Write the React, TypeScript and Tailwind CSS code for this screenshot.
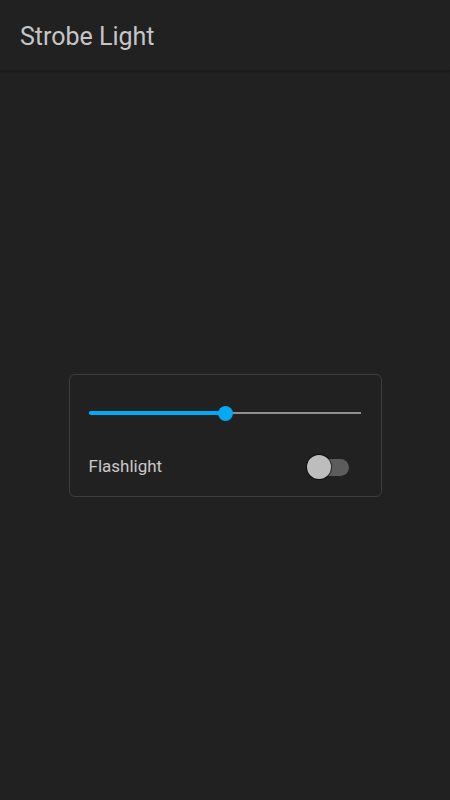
import React from "react";

export default function App() {
  return (
    <div
      className="w-[450px] h-[800px] bg-[#212121] flex flex-col"
      style={{ fontFamily: "Roboto, 'Noto Sans', sans-serif" }}
    >
      <div className="h-[71px] shrink-0 flex items-center px-5 pt-[3px] border-b border-[#1b1b1b] shadow-[0_1px_2px_rgba(0,0,0,0.25)]">
        <span className="text-[25px] text-[#c6c6c6] leading-none">Strobe Light</span>
      </div>
      <div className="flex-1 flex items-center justify-center">
        <div className="w-[313px] border border-[#3d3d3d] rounded-[6px] pl-[19px] pr-5 pt-[19px] pb-[14px] flex flex-col">
          <div className="h-[38px] relative flex items-center">
            <div className="absolute left-0 right-0 h-[2px] bg-[#8f8f8f] top-[18px]" />
            <div className="absolute left-0 w-[136px] h-[4px] bg-[#03a9f4] top-[17px] rounded-l-sm" />
            <div className="absolute left-[129px] top-[11.5px] w-[15px] h-[15px] rounded-full bg-[#03a9f4]" />
          </div>
          <div className="mt-5 h-[30px] flex items-center justify-between">
            <span className="text-[17px] text-[#c8c8c8]">Flashlight</span>
            <div className="relative w-[42px] h-[30px] mr-[12px]">
              <div className="absolute left-[1px] right-0 top-[7px] h-[17px] rounded-full bg-[#5c5c5c]" />
              <div className="absolute left-0 top-[3px] w-[24px] h-[24px] rounded-full bg-[#bdbdbd] shadow-[0_0_1px_1px_rgba(0,0,0,0.6)]" />
            </div>
          </div>
        </div>
      </div>
    </div>
  );
}
